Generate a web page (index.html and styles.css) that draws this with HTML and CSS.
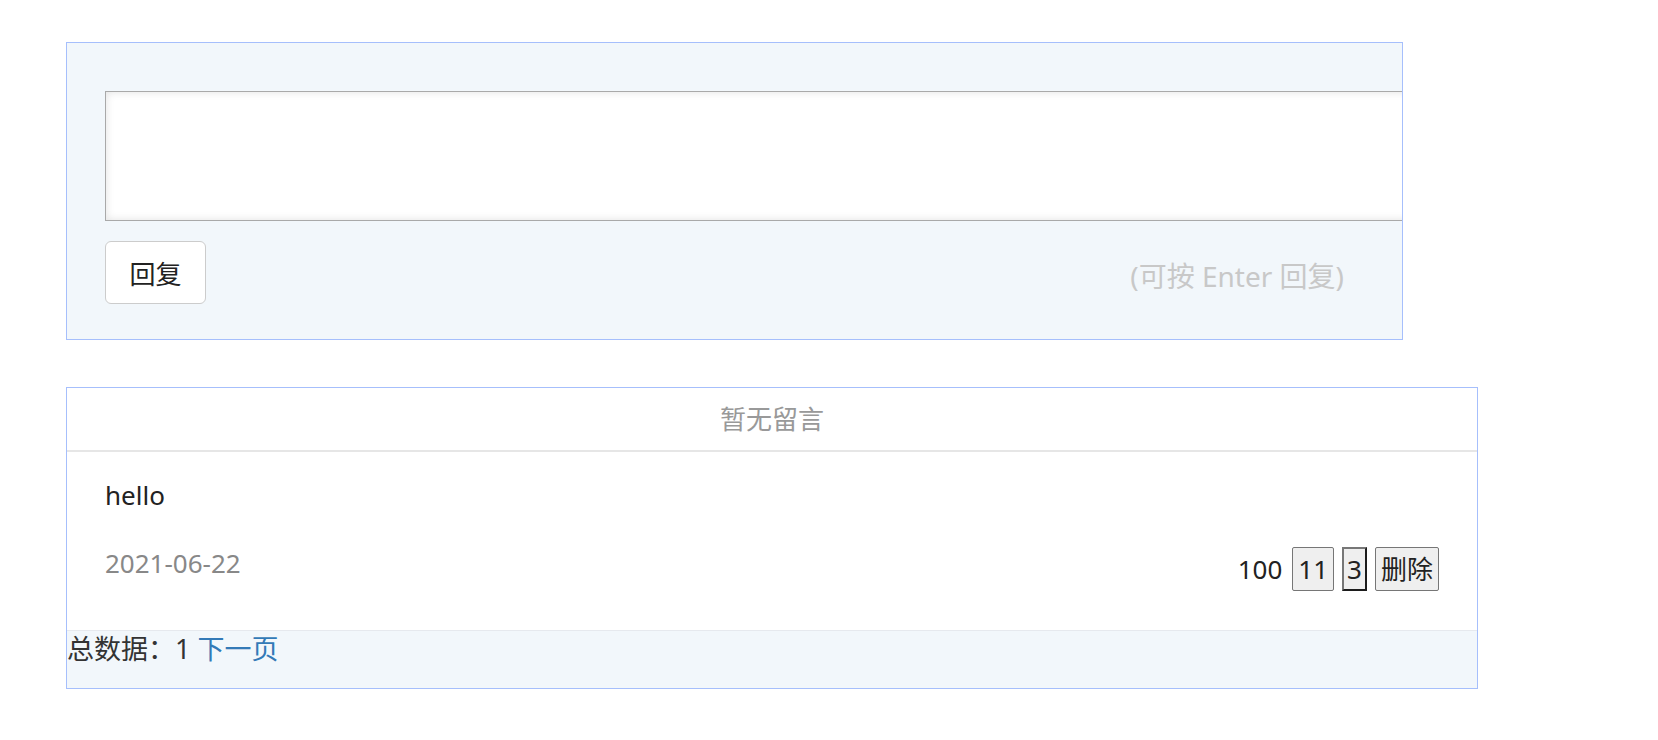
FILE: index.html
```html
<!DOCTYPE html>
<html lang="zh-CN">
<head>
    <meta charset="UTF-8">
    <meta name="viewport" content="width=device-width, initial-scale=1.0">
    <link rel="stylesheet" href="styles.css">
    <title>留言板</title>
</head>
<body>
    <div class="page">
        <div class="reply-box">
            <textarea class="reply-text"></textarea>
            <div class="reply-bar">
                <button class="reply-btn" type="button">回复</button>
                <span class="hint">(可按 Enter 回复)</span>
            </div>
        </div>

        <div class="msg-box">
            <div class="msg-head">暂无留言</div>
            <div class="msg-item">
                <div class="msg-text">hello</div>
                <div class="msg-meta">
                    <span class="msg-date">2021-06-22</span>
                    <div class="msg-ops">
                        <span class="count">100</span>
                        <button class="op">11</button>
                        <button class="op op-pressed">3</button>
                        <button class="op">删除</button>
                    </div>
                </div>
            </div>
            <div class="msg-foot">总数据：1 <a href="#" class="next">下一页</a></div>
        </div>
    </div>
</body>
</html>
```

FILE: styles.css
```css
body {
  margin: 0;
  font-family: "Noto Sans", "Noto Sans CJK SC", sans-serif;
  color: #222;
  background: #fff;
}
.page {
  padding: 42px 0 0 66px;
}
.reply-box {
  box-sizing: border-box;
  width: 1337px;
  border: 1px solid #a6bffc;
  background: #f2f7fb;
  padding: 48px 0 35px 38px;
  overflow: hidden;
}
.reply-text {
  display: block;
  width: 1340px;
  height: 130px;
  margin: 0;
  border: 1px solid #a9a9a9;
  box-shadow: inset 0 0 8px rgba(0, 0, 0, 0.12);
  background: #fff;
  resize: none;
  box-sizing: border-box;
}
.reply-bar {
  display: flex;
  justify-content: space-between;
  align-items: center;
  margin-top: 20px;
  padding-right: 58px;
}
.reply-btn {
  width: 99px;
  height: 61px;
  box-sizing: content-box;
  background: #fff;
  border: 1px solid #ccc;
  border-radius: 6px;
  font-family: "Noto Sans CJK SC", sans-serif;
  font-size: 26px;
  color: #222;
  padding: 0;
  margin: 0;
}
.hint {
  color: #c8c8c8;
  font-size: 28px;
  padding-top: 4px;
}
.msg-box {
  width: 1410px;
  margin-top: 47px;
  border: 1px solid #a6bffc;
  background: #fff;
}
.msg-head {
  height: 62px;
  line-height: 62px;
  text-align: center;
  color: #999;
  font-size: 26px;
  border-bottom: 2px solid #e6e6e6;
}
.msg-item {
  padding: 25px 38px 39px 38px;
  border-bottom: 1px solid #e6e9ee;
}
.msg-text {
  font-size: 26px;
  line-height: 1.45;
}
.msg-meta {
  display: flex;
  justify-content: space-between;
  align-items: flex-start;
  margin-top: 30px;
}
.msg-date {
  color: #888;
  font-size: 26px;
  line-height: 1.4;
}
.msg-ops {
  display: flex;
  align-items: center;
  gap: 8px;
  margin-top: 2px;
  font-size: 26px;
}
.count {
  margin-right: 2px;
}
.op {
  box-sizing: border-box;
  height: 44px;
  font-family: "Noto Sans", "Noto Sans CJK SC", sans-serif;
  font-size: 26px;
  line-height: 40px;
  padding: 0 5px;
  margin: 0;
  background: #efefef;
  color: #222;
  border: 1px solid #767676;
  border-radius: 2px;
}
.op-pressed {
  padding: 0 3px;
  border-width: 2px;
  border-color: #777 #1c1c1c #1c1c1c #777;
  border-radius: 0;
}
.msg-foot {
  background: #f2f7fb;
  height: 57px;
  font-size: 27px;
  color: #333;
  line-height: 36px;
}
.next {
  color: #337ab7;
  text-decoration: none;
}
```
